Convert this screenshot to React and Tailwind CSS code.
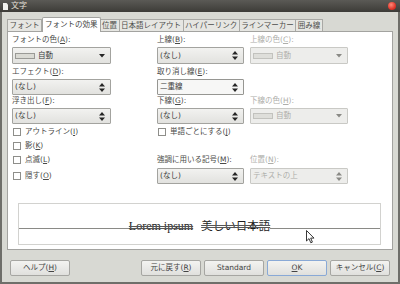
const font = "font-['DejaVu_Sans','Noto_Sans_CJK_JP',sans-serif]";

const Acc = ({ t, k, colon = true }) => (
  <>
    {t}(<span className="underline underline-offset-[1px]">{k}</span>){colon ? ':' : ''}
  </>
);

const Label = ({ children, disabled, className = '' }) => (
  <div
    className={`h-[10px] leading-[10px] text-[7.5px] whitespace-nowrap ${
      disabled ? 'text-[#aeaeaa]' : 'text-[#4a4a48]'
    } ${className}`}
  >
    {children}
  </div>
);

const Spin = ({ disabled }) => (
  <svg width="6" height="9" viewBox="0 0 6 9">
    <path d="M3 0L6 3.5H0Z M0 5.5H6L3 9Z" fill={disabled ? '#8a8a86' : '#262626'} />
  </svg>
);

const Drop = ({ disabled }) => (
  <svg width="6" height="4" viewBox="0 0 6 4">
    <path d="M0 0H6L3 3.5Z" fill={disabled ? '#8a8a86' : '#262626'} />
  </svg>
);

const Box = ({ children, h = 'h-[16px]', disabled, focus, right, className = '' }) => (
  <div
    className={`${h} flex items-center border rounded-[1px] pl-[2px] pr-[5px] text-[7.5px] ${
      disabled
        ? 'border-[#c9c9c5] bg-[#ededeb] text-[#aeaeaa]'
        : focus
        ? 'border-[#969692] bg-[#f7f7f6] text-[#3a3a3a]'
        : 'border-[#a3a39f] bg-gradient-to-b from-[#f2f2f0] to-[#e2e2df] text-[#3a3a3a]'
    } ${className}`}
  >
    <div className="flex-1 flex items-center gap-[3px] whitespace-nowrap">{children}</div>
    {right}
  </div>
);

const Swatch = ({ disabled }) => (
  <span
    className={`inline-block w-[20px] h-[6px] border ${
      disabled ? 'border-[#c2c2be] bg-[#dededa]' : 'border-[#9a9a96] bg-[#dadad4]'
    }`}
  />
);

const Check = ({ children, className = '' }) => (
  <div className={`h-[14px] flex items-center gap-[4px] pl-[1px] ${className}`}>
    <span className="w-[8px] h-[8px] border border-[#8e8e8a] bg-white" />
    <span className="text-[7.5px] text-[#4a4a48] whitespace-nowrap">{children}</span>
  </div>
);

const Button = ({ children, ok, className = '' }) => (
  <button
    type="button"
    className={`w-[60px] h-[16px] rounded-[2px] border text-[7.5px] text-[#444] flex items-center justify-center bg-gradient-to-b from-[#f3f3f1] to-[#e0e0dd] ${
      ok ? 'border-[#89a9d6]' : 'border-[#a6a6a2]'
    } ${className}`}
  >
    {children}
  </button>
);

const tabs = ['フォント', 'フォントの効果', '位置', '日本語レイアウト', 'ハイパーリンク', 'ラインマーカー', '囲み線'];

export default function App() {
  return (
    <div className={`relative w-[400px] h-[284px] overflow-hidden flex flex-col bg-[#d8d9d3] ${font}`}>
      {/* title bar */}
      <div className="h-[12px] shrink-0 flex items-center bg-gradient-to-b from-[#5b5a56] to-[#3d3c38] pl-[3px] pr-[4px]">
        <svg width="5" height="7" viewBox="0 0 5 7">
          <path d="M0 0H3.5L5 1.5V7H0Z" fill="#f2f2ee" />
        </svg>
        <span className="ml-[3px] text-[8px] leading-none text-[#e4e0d8]">文字</span>
        <span className="ml-auto w-[8px] h-[8px] rounded-full bg-[radial-gradient(circle_at_40%_35%,#ff8a7a,#e0362a_60%,#a8211a)]" />
      </div>

      {/* body */}
      <div className="flex-1 flex flex-col border-x-2 border-b-2 border-[#6e6e69] px-[5px]">
        {/* tabs */}
        <div className="flex items-end h-[19px] pt-[4px]">
          {tabs.map((t, i) =>
            i === 1 ? (
              <div
                key={t}
                className="h-[15px] -mb-[1px] px-[2px] flex items-center bg-white border border-b-0 border-[#a3a3a0] rounded-t-[2px] text-[7.5px] text-[#444] relative z-10"
              >
                {t}
              </div>
            ) : (
              <div
                key={t}
                className="h-[12px] px-[1.5px] flex items-center bg-[#e6e6e2] border border-b-0 border-[#a9a9a5] rounded-t-[1px] text-[7.5px] text-[#4e4e4c] -ml-[1px] first:ml-0"
              >
                {t}
              </div>
            )
          )}
        </div>

        {/* panel */}
        <div className="h-[219px] flex flex-col bg-white border border-[#a3a3a0] pl-[4px] pb-[4px]">
          <div className="flex pt-[3px]">
            {/* column 1 */}
            <div className="w-[99px] flex flex-col">
              <Label><Acc t="フォントの色" k="A" /></Label>
              <Box h="h-[17px]" className="mt-[2px]" right={<Drop />}>
                <Swatch />
                <span>自動</span>
              </Box>
              <Label className="mt-[3px]"><Acc t="エフェクト" k="D" /></Label>
              <Box className="mt-[2px]" right={<Spin />}>(なし)</Box>
              <Label className="mt-[1px]"><Acc t="浮き出し" k="F" /></Label>
              <Box className="mt-[2px]" right={<Spin />}>(なし)</Box>
              <Check className="mt-[1px]"><Acc t="アウトライン" k="I" colon={false} /></Check>
              <Check><Acc t="影" k="K" colon={false} /></Check>
              <Check><Acc t="点滅" k="L" colon={false} /></Check>
              <Check className="mt-[2px]"><Acc t="隠す" k="O" colon={false} /></Check>
            </div>

            {/* column 2 */}
            <div className="w-[87px] ml-[46px] flex flex-col">
              <Label><Acc t="上線" k="B" /></Label>
              <Box h="h-[17px]" className="mt-[2px]" right={<Spin />}>(なし)</Box>
              <Label className="mt-[3px]"><Acc t="取り消し線" k="E" /></Label>
              <Box focus className="mt-[2px]" right={<Spin />}>二重線</Box>
              <Label className="mt-[1px]"><Acc t="下線" k="G" /></Label>
              <Box className="mt-[2px]" right={<Spin />}>(なし)</Box>
              <Check className="mt-[1px]"><Acc t="単語ごとにする" k="J" colon={false} /></Check>
              <div className="h-[14px]" />
              <Label className="h-[14px] leading-[14px]"><Acc t="強調に用いる記号" k="M" /></Label>
              <Box className="mt-[1px]" right={<Spin />}>(なし)</Box>
            </div>

            {/* column 3 */}
            <div className="w-[98px] ml-[6px] flex flex-col">
              <Label disabled><Acc t="上線の色" k="C" /></Label>
              <Box disabled h="h-[17px]" className="mt-[2px]" right={<Drop disabled />}>
                <Swatch disabled />
                <span>自動</span>
              </Box>
              <div className="h-[31px]" />
              <Label disabled className="mt-[1px]"><Acc t="下線の色" k="H" /></Label>
              <Box disabled className="mt-[2px]" right={<Drop disabled />}>
                <Swatch disabled />
                <span>自動</span>
              </Box>
              <div className="h-[29px]" />
              <Label disabled className="h-[14px] leading-[14px]"><Acc t="位置" k="N" /></Label>
              <Box disabled className="mt-[1px]" right={<Spin disabled />}>テキストの上</Box>
            </div>
          </div>

          {/* preview */}
          <div className="mt-auto ml-[6px] w-[363px] h-[42px] border border-[#d2d2cf] flex flex-col">
            <div className="h-[25px] flex items-end">
              <div className="flex-1 border-b border-[#8a8a86]" />
              <div className="flex items-baseline leading-none -mb-[3px] text-[#1e1e1e]">
                <span className="font-['Liberation_Serif',serif] text-[12px] line-through decoration-double decoration-[#555]">Lorem ipsum</span>
                <span className="ml-[8px] font-['Noto_Sans_CJK_JP',sans-serif] text-[11.5px] line-through decoration-double decoration-[#555]">美しい日本語</span>
              </div>
              <div className="flex-1 border-b border-[#8a8a86]" />
            </div>
          </div>
        </div>

        {/* buttons */}
        <div className="flex mt-[10px] px-[3px]">
          <Button><Acc t="ヘルプ" k="H" colon={false} /></Button>
          <div className="ml-auto flex gap-[3px]">
            <Button><Acc t="元に戻す" k="R" colon={false} /></Button>
            <Button>Standard</Button>
            <Button ok><span className="underline underline-offset-[1px]">O</span>K</Button>
            <Button><Acc t="キャンセル" k="C" colon={false} /></Button>
          </div>
        </div>
      </div>

      {/* mouse pointer */}
      <svg className="absolute left-[306px] top-[230px]" width="9" height="14" viewBox="0 0 9 14">
        <path d="M0.5 0.5V11L3 8.6L4.8 12.8L6.4 12.1L4.7 8.1H8Z" fill="#fff" stroke="#222" strokeWidth="0.9" strokeLinejoin="round" />
      </svg>
    </div>
  );
}
